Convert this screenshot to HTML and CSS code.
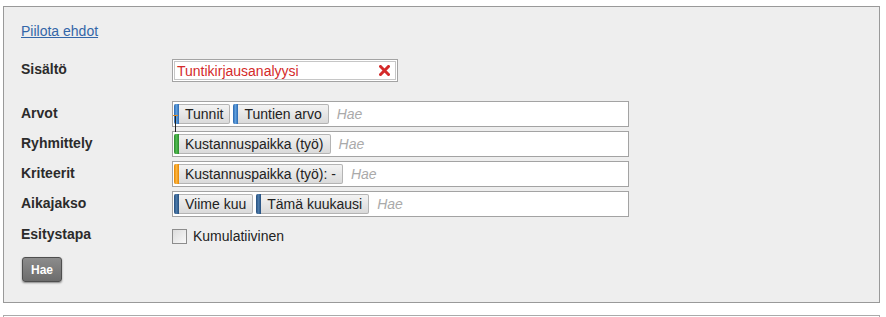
FILE: index.html
```html
<!DOCTYPE html>
<html lang="fi">
<head>
    <meta charset="UTF-8">
    <meta name="viewport" content="width=device-width, initial-scale=1.0">
    <title>Tuntikirjausanalyysi</title>
    <link rel="stylesheet" href="styles.css">
</head>
<body>
    <div class="panel">
        <a class="toggle" href="#">Piilota ehdot</a>

        <div class="row content-row">
            <span class="label">Sisältö</span>
            <div class="select-box">
                <div class="selected">
                    <span>Tuntikirjausanalyysi</span>
                    <svg class="remove" width="11" height="11" viewBox="0 0 11 11">
                        <path d="M1.5 1.5 L9.5 9.5 M9.5 1.5 L1.5 9.5" stroke="#d42a2a" stroke-width="3" stroke-linecap="square"/>
                    </svg>
                </div>
            </div>
        </div>

        <div class="fields">
            <div class="row field-row">
                <span class="label">Arvot</span>
                <div class="tag-field">
                    <span class="tag"><i class="strip blue"></i>Tunnit</span>
                    <span class="tag"><i class="strip blue"></i>Tuntien arvo</span>
                    <span class="placeholder">Hae</span>
                    <span class="drag-mark"></span>
                </div>
            </div>
            <div class="row field-row">
                <span class="label">Ryhmittely</span>
                <div class="tag-field">
                    <span class="tag"><i class="strip green"></i>Kustannuspaikka (työ)</span>
                    <span class="placeholder">Hae</span>
                </div>
            </div>
            <div class="row field-row">
                <span class="label">Kriteerit</span>
                <div class="tag-field">
                    <span class="tag"><i class="strip orange"></i>Kustannuspaikka (työ): -</span>
                    <span class="placeholder">Hae</span>
                </div>
            </div>
            <div class="row field-row">
                <span class="label">Aikajakso</span>
                <div class="tag-field">
                    <span class="tag"><i class="strip navy"></i>Viime kuu</span>
                    <span class="tag"><i class="strip navy"></i>Tämä kuukausi</span>
                    <span class="placeholder">Hae</span>
                </div>
            </div>
        </div>

        <div class="row option-row">
            <span class="label">Esitystapa</span>
            <label class="check">
                <span class="box"></span>
                Kumulatiivinen
            </label>
        </div>

        <button class="search">Hae</button>
    </div>

    <div class="results"></div>
</body>
</html>
```

FILE: styles.css
```css
body {
    margin: 0;
    font-family: "Liberation Sans", Arial, sans-serif;
    font-size: 14px;
    line-height: 16px;
    color: #333;
    background: #fff;
}
.panel {
    margin: 6px 6px 0 3px;
    padding: 16px 17px 20px;
    border: 1px solid #999;
    background: #eee;
}
.toggle {
    display: block;
    width: max-content;
    color: #3366a8;
    text-decoration: underline;
}
.row {
    display: flex;
    align-items: center;
}
.label {
    width: 151px;
    flex-shrink: 0;
    padding-bottom: 3px;
    font-weight: bold;
    color: #2b2b2b;
}
.content-row {
    margin-top: 20px;
}
.select-box {
    width: 226px;
    height: 23px;
    box-sizing: border-box;
    padding: 1px;
    border: 1px solid #a3a3a3;
    background: #fff;
}
.selected {
    height: 19px;
    box-sizing: border-box;
    display: flex;
    align-items: center;
    justify-content: space-between;
    padding: 0 5px 0 2px;
    border: 1px solid #c6c6c6;
    color: #d42a2a;
}
.fields {
    margin-top: 19px;
    display: flex;
    flex-direction: column;
    gap: 4px;
}
.tag-field {
    position: relative;
    width: 457px;
    height: 26px;
    box-sizing: border-box;
    display: flex;
    align-items: center;
    gap: 3px;
    padding: 1px;
    border: 1px solid #a3a3a3;
    background: #fff;
}
.tag {
    display: flex;
    align-items: center;
    height: 20px;
    box-sizing: border-box;
    padding-right: 6px;
    border: 1px solid #b4b4b4;
    border-left: none;
    border-radius: 2px;
    background: linear-gradient(#f3f3f3, #dadada);
    color: #222;
    white-space: nowrap;
}
.strip {
    align-self: stretch;
    width: 5px;
    margin: -1px 6px -1px 0;
    border-radius: 2px 0 0 2px;
}
.blue {
    background: linear-gradient(to right, #2a67b0, #5f9fdd, #2a67b0);
}
.green {
    background: linear-gradient(to right, #2a8a2a, #4fba4f, #2a8a2a);
}
.orange {
    background: linear-gradient(to right, #e58600, #fbb440, #e58600);
}
.navy {
    background: linear-gradient(to right, #254f7e, #4a78a8, #254f7e);
}
.placeholder {
    margin-left: 5px;
    color: #aaa;
    font-style: italic;
}
.drag-mark {
    position: absolute;
    left: 2px;
    top: 13px;
    width: 1px;
    height: 17px;
    background: #222;
    z-index: 2;
}
.drag-mark::before {
    content: "";
    position: absolute;
    left: -2px;
    top: 0;
    width: 5px;
    height: 1px;
    background: #e08a1e;
}
.option-row {
    margin-top: 9px;
}
.check {
    display: flex;
    align-items: center;
    gap: 6px;
    color: #222;
}
.box {
    width: 15px;
    height: 15px;
    box-sizing: border-box;
    border: 1px solid #8c8c8c;
    background: linear-gradient(135deg, #dcdcdc, #f8f8f8);
    margin-top: 2px;
}
.search {
    display: block;
    margin: 12px 0 0 1px;
    width: 40px;
    height: 25px;
    padding: 0;
    border: 1px solid #4e4e4e;
    border-radius: 3px;
    background: linear-gradient(#8c8c8c, #6c6c6c);
    box-shadow: 0 1px 2px rgba(0, 0, 0, 0.45);
    color: #fff;
    font-family: "Liberation Sans", Arial, sans-serif;
    font-size: 12px;
    font-weight: bold;
}
.results {
    margin: 12px 6px 0 3px;
    height: 1px;
    border: 1px solid #aaa;
    border-bottom: none;
    background: #fff;
}
```
